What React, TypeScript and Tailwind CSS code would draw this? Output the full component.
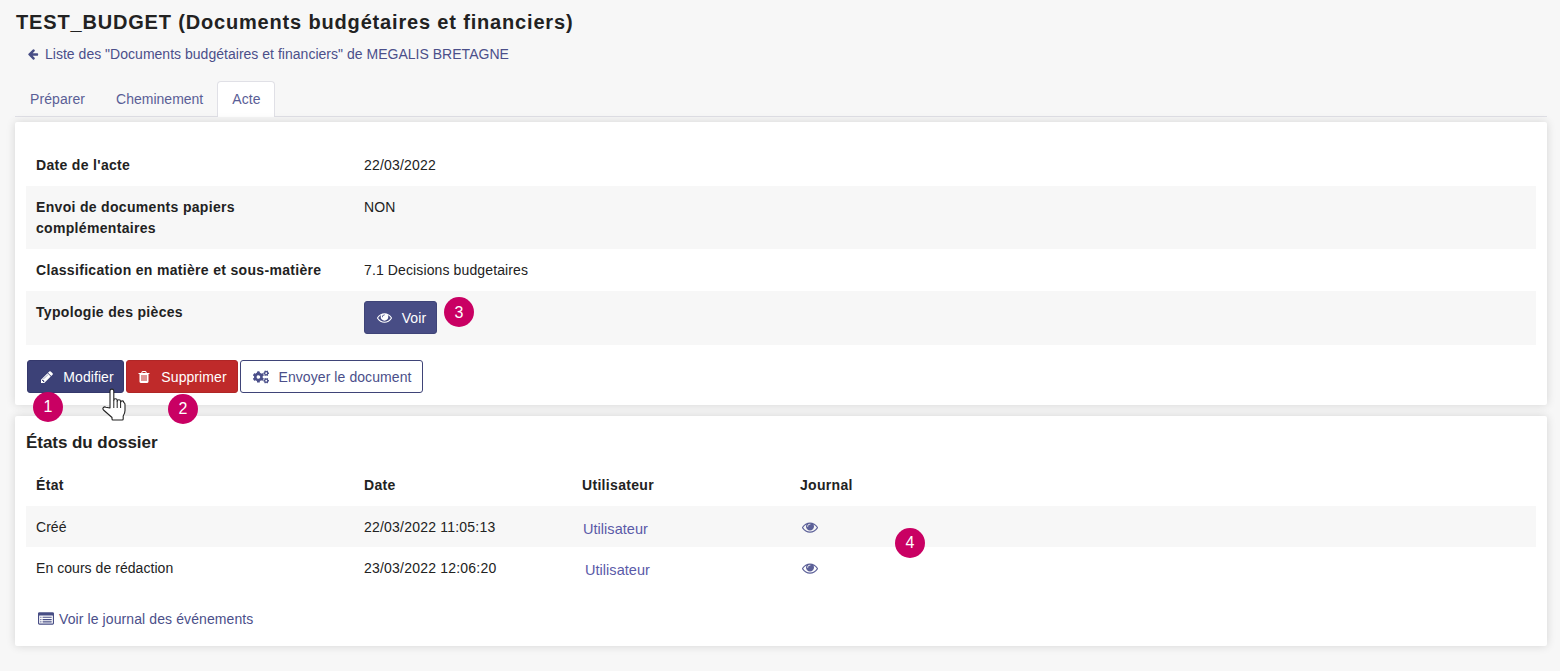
import { FaCogs } from 'react-icons/fa'

const font = { fontFamily: '"Liberation Sans", Arial, sans-serif' }

// icônes Font Awesome 4 (le pack fa de react-icons est en v5, dessin différent)
const eyePath =
  'M1664 960q-152-236-381-353 61 104 61 225 0 185-131.500 316.500t-316.500 131.500-316.500-131.500-131.500-316.500q0-121 61-225-229 117-381 353 133 205 333.500 326.500t434.500 121.500 434.500-121.500 333.500-326.500zm-720-384q0-20-14-34t-34-14q-125 0-214.500 89.500t-89.500 214.500q0 20 14 34t34 14 34-14 14-34q0-86 61-147t147-61q20 0 34-14t14-34zm848 384q0 34-20 69-140 230-376.500 368.500t-499.500 138.500-499.500-139-376.500-368q-20-35-20-69t20-69q140-229 376.500-368t499.500-139 499.500 139 376.500 368q20 35 20 69z'
const pencilPath =
  'M491 1536l91-91-235-235-91 91v107h128v128h107zm523-928q0-22-22-22-10 0-17 7l-542 542q-7 7-7 17 0 22 22 22 10 0 17-7l542-542q7-7 7-17zm-54-192l416 416-832 832h-416v-416zm683 96q0 53-37 90l-166 166-416-416 166-165q36-38 90-38 53 0 91 38l235 234q37 39 37 91z'
const trashPath =
  'M704 1376v-704q0-14-9-23t-23-9h-64q-14 0-23 9t-9 23v704q0 14 9 23t23 9h64q14 0 23-9t9-23zm256 0v-704q0-14-9-23t-23-9h-64q-14 0-23 9t-9 23v704q0 14 9 23t23 9h64q14 0 23-9t9-23zm256 0v-704q0-14-9-23t-23-9h-64q-14 0-23 9t-9 23v704q0 14 9 23t23 9h64q14 0 23-9t9-23zm-544-992h448l-48-117q-7-9-17-11h-317q-10 2-17 11zm928 32v64q0 14-9 23t-23 9h-96v948q0 83-47 143.500t-113 60.500h-832q-66 0-113-58.500t-47-141.500v-952h-96q-14 0-23-9t-9-23v-64q0-14 9-23t23-9h309l70-167q15-37 54-63t79-26h320q40 0 79 26t54 63l70 167h309q14 0 23 9t9 23z'
const arrowPath =
  'M1664 896v128q0 53-32.500 90.500t-84.500 37.500h-704l293 294q38 36 38 90t-38 90l-75 76q-37 37-90 37-52 0-91-37l-651-652q-37-37-37-90 0-52 37-91l651-650q38-38 91-38 52 0 90 38l75 74q38 38 38 91t-38 91l-293 293h704q52 0 84.500 37.500t32.500 90.500z'
const listPath =
  'M384 1184v64q0 13-9.500 22.500t-22.500 9.500h-64q-13 0-22.500-9.500t-9.500-22.500v-64q0-13 9.500-22.500t22.500-9.500h64q13 0 22.500 9.500t9.500 22.500zm0-256v64q0 13-9.500 22.500t-22.500 9.500h-64q-13 0-22.500-9.500t-9.500-22.500v-64q0-13 9.500-22.500t22.500-9.500h64q13 0 22.500 9.500t9.500 22.500zm0-256v64q0 13-9.500 22.500t-22.500 9.500h-64q-13 0-22.500-9.500t-9.500-22.500v-64q0-13 9.500-22.500t22.500-9.500h64q13 0 22.500 9.500t9.500 22.500zm1152 512v64q0 13-9.500 22.500t-22.500 9.500h-960q-13 0-22.500-9.500t-9.500-22.500v-64q0-13 9.500-22.500t22.500-9.500h960q13 0 22.500 9.500t9.500 22.500zm0-256v64q0 13-9.500 22.500t-22.500 9.500h-960q-13 0-22.500-9.500t-9.500-22.500v-64q0-13 9.500-22.500t22.500-9.500h960q13 0 22.500 9.500t9.500 22.500zm0-256v64q0 13-9.500 22.500t-22.500 9.500h-960q-13 0-22.500-9.500t-9.500-22.500v-64q0-13 9.500-22.500t22.500-9.500h960q13 0 22.500 9.500t9.500 22.500zm128 704v-832q0-13-9.500-22.500t-22.500-9.500h-1472q-13 0-22.500 9.500t-9.500 22.500v832q0 13 9.500 22.500t22.500 9.500h1472q13 0 22.500-9.500t9.500-22.500zm128-1088v1088q0 66-47 113t-113 47h-1472q-66 0-113-47t-47-113v-1088q0-66 47-113t113-47h1472q66 0 113 47t47 113z'

function Fa({ d, className }: { d: string; className: string }) {
  return (
    <svg className={className} viewBox="0 0 1792 1792" fill="currentColor">
      <path d={d} />
    </svg>
  )
}

function Badge({ n, className }: { n: number; className: string }) {
  return (
    <span className={`absolute z-10 flex h-[30px] w-[30px] items-center justify-center rounded-full bg-[#c90063] text-[16px] text-white ${className}`}>
      {n}
    </span>
  )
}

function HandCursor() {
  return (
    <svg className="absolute left-[75px] top-[28px] z-20" width="25" height="33" viewBox="0 0 25 33">
      <path
        d="M8 20V3a1.900 1.900 0 0 1 3.800 0v9.500a1.700 1.700 0 0 1 3.400 0v1a1.700 1.700 0 0 1 3.400 0v1a1.600 1.600 0 0 1 3.200 0c1 .5 1.200 1 1.200 2v6c0 2.500-.8 4-1.800 5.500V31a1 1 0 0 1-1 1H11a1 1 0 0 1-1-1v-1.500L1.500 22c-1.500-1.700.3-3.800 2.300-2.800z"
        fill="#fff"
        stroke="#222"
        strokeWidth="1.100"
        strokeLinejoin="round"
      />
      <path d="M11.800 12.500V20M15.200 13.500V20M18.600 14.500V20" stroke="#222" strokeWidth="1" />
    </svg>
  )
}

function InfoRow({ label, shaded, children, h, pt = 'pt-[11px]' }: { label: string; shaded?: boolean; children: React.ReactNode; h: string; pt?: string }) {
  return (
    <div className={`flex px-[10px] ${h} ${shaded ? 'bg-[#f7f7f7]' : ''}`}>
      <div className="w-[328px] pt-[11px] pr-[30px] text-[14px] leading-[21px] font-bold tracking-[0.32px] text-[#222]">{label}</div>
      <div className={`relative flex-1 text-[14px] leading-[21px] tracking-[0.12px] text-[#222] ${pt}`}>{children}</div>
    </div>
  )
}

const states = [
  { name: 'Créé', date: '22/03/2022 11:05:13', userPad: 'pl-[1px]', shaded: true },
  { name: 'En cours de rédaction', date: '23/03/2022 12:06:20', userPad: 'pl-[3px]', shaded: false },
]

export default function App() {
  return (
    <div className="h-[671px] w-[1560px] overflow-hidden bg-[#f7f7f7] pr-[13px] pl-[15px]" style={font}>
      <h1 className="ml-[1px] pt-[10px] text-[20px] leading-[24px] font-bold tracking-[0.83px] text-[#222]">
        TEST_BUDGET (Documents budgétaires et financiers)
      </h1>
      <a className="mt-[10px] ml-[12px] flex items-center gap-[6px] text-[14px] leading-[20px] tracking-[0.02px] text-[#4b4f8a]">
        <Fa d={arrowPath} className="h-[12px] w-[12px] text-[#474d85]" />
        Liste des "Documents budgétaires et financiers" de MEGALIS BRETAGNE
      </a>

      {/* onglets */}
      <div className="mt-[17px] flex h-[36px] border-b border-[#e0e0e6] text-[14px] tracking-[0.08px] text-[#5a5e96]">
        <div className="px-[15px] pt-[8px]">Préparer</div>
        <div className="pr-[14px] pl-[16px] pt-[8px] tracking-[0px]">Cheminement</div>
        <div className="mb-[-1px] w-[58px] rounded-t-[4px] border border-b-0 border-[#e0e0e6] bg-white pt-[7px] pl-[14px]">Acte</div>
      </div>

      <div className="relative mt-[5px] h-[283px] rounded-[2px] bg-white px-[11px] pt-[22px] shadow-[0_0_10px_rgba(0,0,0,0.14)]">
        <InfoRow label="Date de l'acte" h="h-[42px]">
          <span className="tracking-[0.2px]">22/03/2022</span>
        </InfoRow>
        <InfoRow label="Envoi de documents papiers complémentaires" shaded h="h-[63px]">NON</InfoRow>
        <InfoRow label="Classification en matière et sous-matière" h="h-[42px]">7.1 Decisions budgetaires</InfoRow>
        <InfoRow label="Typologie des pièces" shaded h="h-[54px]" pt="pt-[10px]">
          <button className="flex h-[33px] w-[73px] items-center justify-center gap-[10px] rounded-[3px] border border-[#3f4478] bg-[#484d85] pl-[2px] text-[14px] text-white">
            <Fa d={eyePath} className="h-[15px] w-[15px]" />
            <span className="pt-[1px]">Voir</span>
          </button>
          <Badge n={3} className="left-[80px] top-[6px]" />
        </InfoRow>

        <div className="relative mt-[15px] ml-[1px] flex gap-[2px] text-[14px] tracking-[0.08px]">
          <button className="flex h-[33px] w-[97px] items-center justify-center gap-[9px] rounded-[3px] border border-[#34386c] bg-[#3c4177] pl-[2px] text-white">
            <Fa d={pencilPath} className="ml-[1px] h-[14px] w-[14px]" />
            <span className="pt-[1px]">Modifier</span>
          </button>
          <button className="flex h-[33px] w-[112px] items-center justify-center gap-[10px] rounded-[3px] border border-[#b02626] bg-[#bf2a2a] text-white">
            <Fa d={trashPath} className="h-[14px] w-[14px]" />
            <span className="pt-[1px]">Supprimer</span>
          </button>
          <button className="flex h-[33px] w-[183px] items-center justify-center gap-[9px] rounded-[3px] border border-[#3f4478] bg-white pl-[2px] text-[#4b4f8a]">
            <FaCogs className="h-[16px] w-[16px]" />
            <span className="pt-[1px]">Envoyer le document</span>
          </button>
          <Badge n={1} className="left-[6px] top-[32px]" />
          <Badge n={2} className="left-[141px] top-[34px]" />
          <HandCursor />
        </div>
      </div>

      <div className="relative mt-[11px] h-[230px] rounded-[2px] bg-white px-[11px] pt-[17px] shadow-[0_0_10px_rgba(0,0,0,0.14)]">
        <h2 className="text-[17px] leading-[20px] font-bold tracking-[-0.05px] text-[#222]">États du dossier</h2>
        <div className="mt-[17px] flex h-[36px] px-[10px] pt-[5px] text-[14px] leading-[21px] font-bold tracking-[0.32px] text-[#222]">
          <div className="w-[328px]">État</div>
          <div className="w-[218px]">Date</div>
          <div className="w-[218px]">Utilisateur</div>
          <div>Journal</div>
        </div>
        {states.map((s) => (
          <div key={s.name} className={`flex h-[41px] px-[10px] pt-[11px] text-[14px] leading-[21px] text-[#222] ${s.shaded ? 'bg-[#f7f7f7]' : ''}`}>
            <div className="w-[328px] tracking-[0.05px]">{s.name}</div>
            <div className="w-[218px] tracking-[0.21px]">{s.date}</div>
            <div className={`w-[218px] pt-[2px] text-[14.5px] tracking-[0.04px] text-[#5a5aa8] ${s.userPad}`}>Utilisateur</div>
            <div className="pl-[2px] pt-[2px]">
              <Fa d={eyePath} className="h-[16px] w-[16px] text-[#5c6098]" />
            </div>
          </div>
        ))}
        <Badge n={4} className="left-[880px] top-[112px]" />
        <a className="mt-[20px] ml-[12px] flex items-center gap-[5px] text-[14px] leading-[22px] tracking-[0.1px] text-[#4b4f8a]">
          <Fa d={listPath} className="h-[16px] w-[16px] text-[#474d85]" />
          Voir le journal des événements
        </a>
      </div>
    </div>
  )
}
